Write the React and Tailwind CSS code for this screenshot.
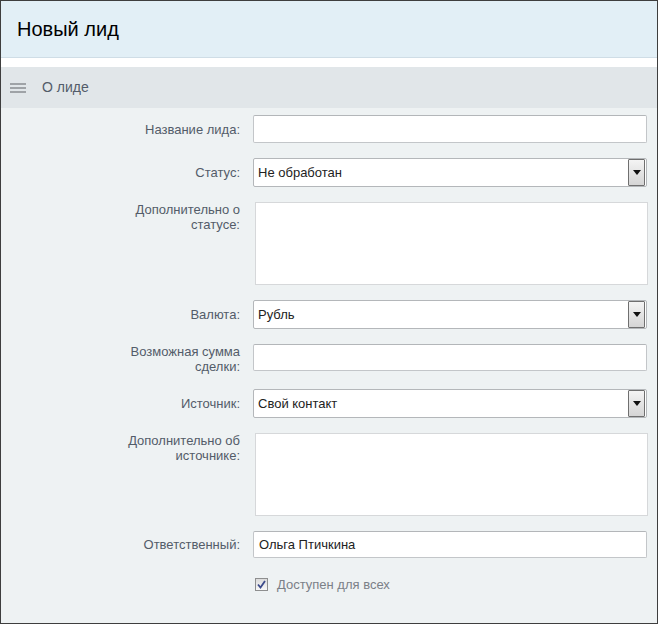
import React from 'react';

const Label = ({ children, top }) => (
  <div
    className={`w-[239px] shrink-0 text-right text-[13px] leading-[15px] text-[#535c69] ${
      top ? 'pt-0' : 'self-center'
    }`}
  >
    {children}
  </div>
);

const TextInput = ({ value, h = 'h-[28px]' }) => (
  <div
    className={`ml-[13px] w-[394px] ${h} bg-white border border-[#c3c6c9] border-t-[#b3b6b9] rounded-[2px] flex items-center px-[5px] text-[13px] text-[#222]`}
  >
    {value}
  </div>
);

const Select = ({ value }) => (
  <div className="ml-[13px] w-[394px] h-[29px] bg-white border border-[#b4b7ba] rounded-[2px] flex items-stretch">
    <div className="flex-1 flex items-center px-[4px] text-[13px] text-[#222]">{value}</div>
    <div className="w-[17px] mr-[1px] border border-[#6f6f6f] rounded-[1px] bg-gradient-to-b from-[#f4f4f4] to-[#d5d5d5] flex items-center justify-center">
      <svg width="8" height="5" viewBox="0 0 8 5">
        <path d="M0 0 L8 0 L4 5 Z" fill="#111" />
      </svg>
    </div>
  </div>
);

const TextArea = () => (
  <div className="ml-[15px] w-[393px] h-[83px] bg-white border border-[#d6d8da]" />
);

export default function App() {
  return (
    <div
      className="w-[658px] h-[624px] border border-[#3e3e3e] bg-[#eef2f3] overflow-hidden"
      style={{ fontFamily: '"Liberation Sans", Arial, sans-serif' }}
    >
      <div className="h-[57px] bg-[#e2eff6] border-b border-[#cfdde6] flex items-center pl-[16px]">
        <span className="text-[20px] text-black">Новый лид</span>
      </div>
      <div className="h-[9px] bg-white" />
      <div className="h-[41px] bg-[#e1e6e9] flex items-center">
        <div className="ml-[9px] w-[16px] flex flex-col gap-[2px]">
          <div className="h-[2px] bg-[#9fa3a7]" />
          <div className="h-[2px] bg-[#9fa3a7]" />
          <div className="h-[2px] bg-[#9fa3a7]" />
        </div>
        <span className="ml-[16px] text-[14px] text-[#535c69]">О лиде</span>
      </div>

      <div className="pt-[7px] flex flex-col gap-[15px]">
        <div className="flex">
          <Label>Название лида:</Label>
          <TextInput value="" />
        </div>
        <div className="flex">
          <Label>Статус:</Label>
          <Select value="Не обработан" />
        </div>
        <div className="flex items-start">
          <Label top>
            Дополнительно о<br />статусе:
          </Label>
          <TextArea />
        </div>
        <div className="flex">
          <Label>Валюта:</Label>
          <Select value="Рубль" />
        </div>
        <div className="flex">
          <Label>
            Возможная сумма<br />сделки:
          </Label>
          <TextInput value="" h="h-[27px]" />
        </div>
        <div className="flex">
          <Label>Источник:</Label>
          <Select value="Свой контакт" />
        </div>
        <div className="flex items-start">
          <Label top>
            Дополнительно об<br />источнике:
          </Label>
          <TextArea />
        </div>
        <div className="flex">
          <Label>Ответственный:</Label>
          <TextInput value="Ольга Птичкина" h="h-[27px]" />
        </div>
        <div className="flex items-center mt-[2px] pl-[254px]">
          <div className="w-[13px] h-[13px] border border-[#8e8f8f] bg-gradient-to-b from-[#dcdcdc] to-[#f7f7f7] flex items-center justify-center">
            <svg width="9" height="9" viewBox="0 0 9 9">
              <path d="M1 4.5 L3.5 7.5 L8 1" stroke="#3b4a8a" strokeWidth="1.8" fill="none" />
            </svg>
          </div>
          <span className="ml-[9px] text-[13px] text-[#7b8087]">Доступен для всех</span>
        </div>
      </div>
    </div>
  );
}
